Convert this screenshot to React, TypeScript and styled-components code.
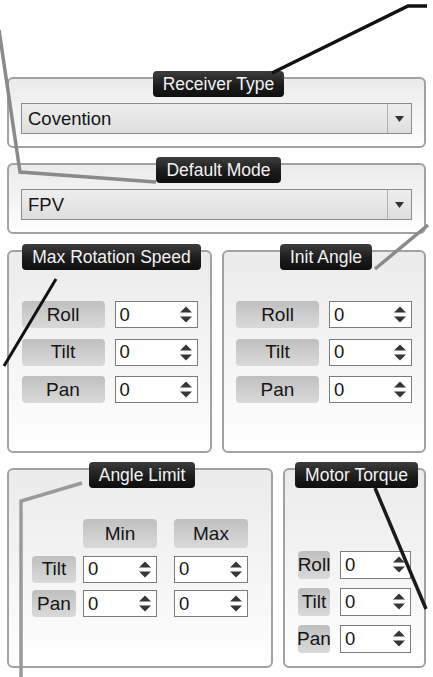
import styled, { createGlobalStyle } from "styled-components";

const GlobalStyle = createGlobalStyle`
  html, body {
    margin: 0;
    padding: 0;
    background: #ffffff;
  }
  body {
    font-family: "Liberation Sans", Arial, sans-serif;
    color: #1a1a1a;
  }
  * {
    box-sizing: border-box;
  }
`;

const Page = styled.div`
  position: relative;
  width: 433px;
  height: 677px;
  overflow: hidden;
  padding: 77px 7px 0 7px;
  display: flex;
  flex-direction: column;
`;

const Panel = styled.div<{ $h: number; $mb?: number }>`
  height: ${({ $h }) => $h}px;
  margin-bottom: ${({ $mb }) => $mb ?? 0}px;
  border: 2px solid #a2a2a2;
  border-radius: 6px;
  background: linear-gradient(to bottom, #ebebeb 0%, #f6f6f6 60%, #ffffff 100%);
  display: flex;
  flex-direction: column;
  padding: 0 12px;
`;

const Tag = styled.div`
  align-self: center;
  margin-top: -8px;
  height: 26px;
  line-height: 26px;
  padding: 0 10px;
  border-radius: 4px;
  background: linear-gradient(to bottom, #3d3d3d 0%, #1c1c1c 55%, #0e0e0e 100%);
  color: #f2f2f2;
  font-size: 17.5px;
  white-space: nowrap;
  position: relative;
  left: 2px;
`;

const Select = styled.div`
  margin-top: 6px;
  height: 31px;
  border: 1px solid #8c8c8c;
  background: linear-gradient(to bottom, #eeeeee 0%, #dedede 100%);
  display: flex;
  align-items: stretch;
`;

const SelectText = styled.div`
  flex: 1;
  padding-left: 6px;
  font-size: 18.5px;
  line-height: 29px;
  color: #151515;
`;

const SelectArrow = styled.div`
  width: 24px;
  border-left: 1px solid #b0b0b0;
  display: flex;
  align-items: center;
  justify-content: center;
`;

const PanelRow = styled.div<{ $cols: string; $h: number; $mb?: number }>`
  display: grid;
  grid-template-columns: ${({ $cols }) => $cols};
  column-gap: 10px;
  height: ${({ $h }) => $h}px;
  margin-bottom: ${({ $mb }) => $mb ?? 0}px;
  & > ${Panel} {
    height: auto;
  }
`;

const Fields = styled.div<{ $cols: string; $top: number; $rowH: number; $rowGap: number }>`
  margin-top: ${({ $top }) => $top}px;
  display: grid;
  grid-template-columns: ${({ $cols }) => $cols};
  grid-auto-rows: ${({ $rowH }) => $rowH}px;
  column-gap: 10px;
  row-gap: ${({ $rowGap }) => $rowGap}px;
  justify-content: center;
`;

const LimitFields = styled(Fields)`
  column-gap: 7px;
  grid-template-rows: 29px;
  & > :nth-child(3n) {
    justify-self: end;
    width: 74px;
  }
`;

const Label = styled.div`
  border-radius: 4px;
  background: linear-gradient(to bottom, #bfbfbf 0%, #cdcdcd 50%, #d9d9d9 100%);
  color: #151515;
  font-size: 19px;
  display: flex;
  align-items: center;
  justify-content: center;
  white-space: nowrap;
`;

const Spacer = styled.div``;

const Spin = styled.div`
  border: 1px solid #7c7c7c;
  background: #ffffff;
  display: flex;
  align-items: center;
  justify-content: space-between;
  padding: 0 5px 0 4px;
  font-size: 18.5px;
  color: #151515;
`;

const DownTriangle = () => (
  <svg width="9" height="6" viewBox="0 0 9 6">
    <polygon points="0,0 9,0 4.5,6" fill="#333" />
  </svg>
);

const SpinIcon = () => (
  <svg width="12" height="17" viewBox="0 0 12 17">
    <polygon points="0,6.5 6,0.5 12,6.5" fill="#363636" />
    <polygon points="0,10.5 12,10.5 6,16.5" fill="#363636" />
  </svg>
);

const Spinner = ({ value }: { value: string }) => (
  <Spin>
    <span>{value}</span>
    <SpinIcon />
  </Spin>
);

const Overlay = styled.svg`
  position: absolute;
  left: 0;
  top: 0;
  width: 433px;
  height: 677px;
  pointer-events: none;
`;

const axes = ["Roll", "Tilt", "Pan"];

const AxisFields = ({ cols, top, rowH, rowGap }: { cols: string; top: number; rowH: number; rowGap: number }) => (
  <Fields $cols={cols} $top={top} $rowH={rowH} $rowGap={rowGap}>
    {axes.flatMap((a) => [<Label key={a + "l"}>{a}</Label>, <Spinner key={a + "s"} value="0" />])}
  </Fields>
);

export default function App() {
  return (
    <>
      <GlobalStyle />
      <Page>
        <Panel $h={71} $mb={15}>
          <Tag>Receiver Type</Tag>
          <Select>
            <SelectText>Covention</SelectText>
            <SelectArrow>
              <DownTriangle />
            </SelectArrow>
          </Select>
        </Panel>

        <Panel $h={71} $mb={16}>
          <Tag>Default Mode</Tag>
          <Select>
            <SelectText>FPV</SelectText>
            <SelectArrow>
              <DownTriangle />
            </SelectArrow>
          </Select>
        </Panel>

        <PanelRow $cols="205px 204px" $h={203} $mb={15}>
          <Panel $h={203}>
            <Tag>Max Rotation Speed</Tag>
            <AxisFields cols="83px 83px" top={31} rowH={27} rowGap={10.5} />
          </Panel>
          <Panel $h={203}>
            <Tag>Init Angle</Tag>
            <AxisFields cols="83px 83px" top={31} rowH={27} rowGap={10.5} />
          </Panel>
        </PanelRow>

        <PanelRow $cols="266px 143px" $h={200}>
          <Panel $h={200}>
            <Tag>Angle Limit</Tag>
            <LimitFields $cols="44px 74px 84px" $top={31} $rowH={27} $rowGap={7.5}>
              <Spacer />
              <Label>Min</Label>
              <Label>Max</Label>
              <Label>Tilt</Label>
              <Spinner value="0" />
              <Spinner value="0" />
              <Label>Pan</Label>
              <Spinner value="0" />
              <Spinner value="0" />
            </LimitFields>
          </Panel>
          <Panel $h={200}>
            <Tag>Motor Torque</Tag>
            <AxisFields cols="32px 71px" top={63} rowH={27.5} rowGap={9.5} />
          </Panel>
        </PanelRow>

        <Overlay viewBox="0 0 433 677">
          <g fill="none" strokeLinejoin="miter" strokeLinecap="butt">
            <polyline points="272,73 408,6 427,6" stroke="#111" strokeWidth="3.5" />
            <polyline points="-1,30 20,172 156,182" stroke="#8a8a8a" strokeWidth="3.5" />
            <polyline points="428,225 375,269" stroke="#8a8a8a" strokeWidth="3.5" />
            <polyline points="56,279 4,366" stroke="#111" strokeWidth="3" />
            <polyline points="82,483 21,501 21,680" stroke="#9a9a9a" strokeWidth="3.5" />
            <polyline points="375,488 426,609" stroke="#1a1a1a" strokeWidth="3.5" />
          </g>
        </Overlay>
      </Page>
    </>
  );
}
